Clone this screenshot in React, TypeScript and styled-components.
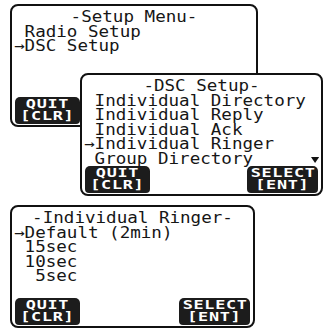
import React from 'react'
import styled, { createGlobalStyle } from 'styled-components'

const GlobalStyle = createGlobalStyle`
    html, body {
        margin: 0;
        padding: 0;
        background: #fff;
    }
    body {
        font-family: "DejaVu Sans Mono", "Liberation Mono", monospace;
        color: #161616;
    }
`

const Page = styled.div`
    width: 323px;
    height: 329px;
    overflow: hidden;
    padding-top: 4px;
    box-sizing: border-box;
    display: flex;
    flex-direction: column;
    align-items: flex-start;
`

const Screen = styled.div<{ $left: number; $width: number; $top: number }>`
    position: relative;
    flex: none;
    margin-left: ${props => props.$left}px;
    margin-top: ${props => props.$top}px;
    width: ${props => props.$width}px;
    height: 123px;
    box-sizing: border-box;
    border: 2px solid #111;
    border-radius: 8px;
    background: #fff;
    padding: 4px 2px 1px 2px;
    display: flex;
    flex-direction: column;
`

// the lcd font is wider than any mono face we have, so stretch it
const Lines = styled.div`
    width: calc(100% / 1.17);
    transform: scaleX(1.17);
    transform-origin: left top;
    font-size: 15px;
    line-height: 14.5px;
    white-space: pre;
`

const Title = styled.div`
    text-align: center;
`

const Row = styled.div`
    display: flex;
    justify-content: space-between;
    align-items: flex-end;
`

const MoreMark = styled.svg`
    width: 7px;
    height: 6px;
    margin-bottom: 3px;
    fill: #111;
`

const KeyRow = styled.div`
    margin-top: auto;
    padding: 0 1px;
    display: flex;
    justify-content: space-between;
`

const SoftKey = styled.div<{ $width: number }>`
    width: ${props => props.$width}px;
    height: 27px;
    background: #1c1c1c;
    border-radius: 5px 5px 4px 4px;
    color: #fff;
    display: flex;
    flex-direction: column;
    align-items: center;
    justify-content: center;
    font-size: 12px;
    font-weight: bold;
    line-height: 11.5px;
`

const KeyText = styled.span`
    display: block;
    white-space: pre;
    letter-spacing: 0.5px;
    margin-left: 0.5px;
    transform: scaleX(1.4);
`

function Key({ top, bottom, width }: { top: string; bottom: string; width: number }) {
    return (
        <SoftKey $width={width}>
            <KeyText>{top}</KeyText>
            <KeyText>{bottom}</KeyText>
        </SoftKey>
    )
}

function App() {
    return (
        <Page>
            <GlobalStyle />
            <Screen $left={10} $width={248} $top={0}>
                <Lines>
                    <Title>-Setup Menu-</Title>
                    <div> Radio Setup</div>
                    <div>→DSC Setup</div>
                </Lines>
                <KeyRow>
                    <Key top="QUIT" bottom="[CLR]" width={65} />
                </KeyRow>
            </Screen>

            <Screen $left={80} $width={243} $top={-54}>
                <Lines>
                    <Title>-DSC Setup-</Title>
                    <div> Individual Directory</div>
                    <div> Individual Reply</div>
                    <div> Individual Ack</div>
                    <div>→Individual Ringer</div>
                    <Row>
                        <span> Group Directory</span>
                        <MoreMark viewBox="0 0 7 6">
                            <polygon points="0,0 7,0 3.5,6" />
                        </MoreMark>
                    </Row>
                </Lines>
                <KeyRow>
                    <Key top="QUIT" bottom="[CLR]" width={65} />
                    <Key top="SELECT" bottom="[ENT]" width={71} />
                </KeyRow>
            </Screen>

            <Screen $left={10} $width={245} $top={9}>
                <Lines>
                    <Title>-Individual Ringer-</Title>
                    <div>→Default (2min)</div>
                    <div> 15sec</div>
                    <div> 10sec</div>
                    <div>  5sec</div>
                </Lines>
                <KeyRow>
                    <Key top="QUIT" bottom="[CLR]" width={65} />
                    <Key top="SELECT" bottom="[ENT]" width={71} />
                </KeyRow>
            </Screen>
        </Page>
    )
}

export default App
